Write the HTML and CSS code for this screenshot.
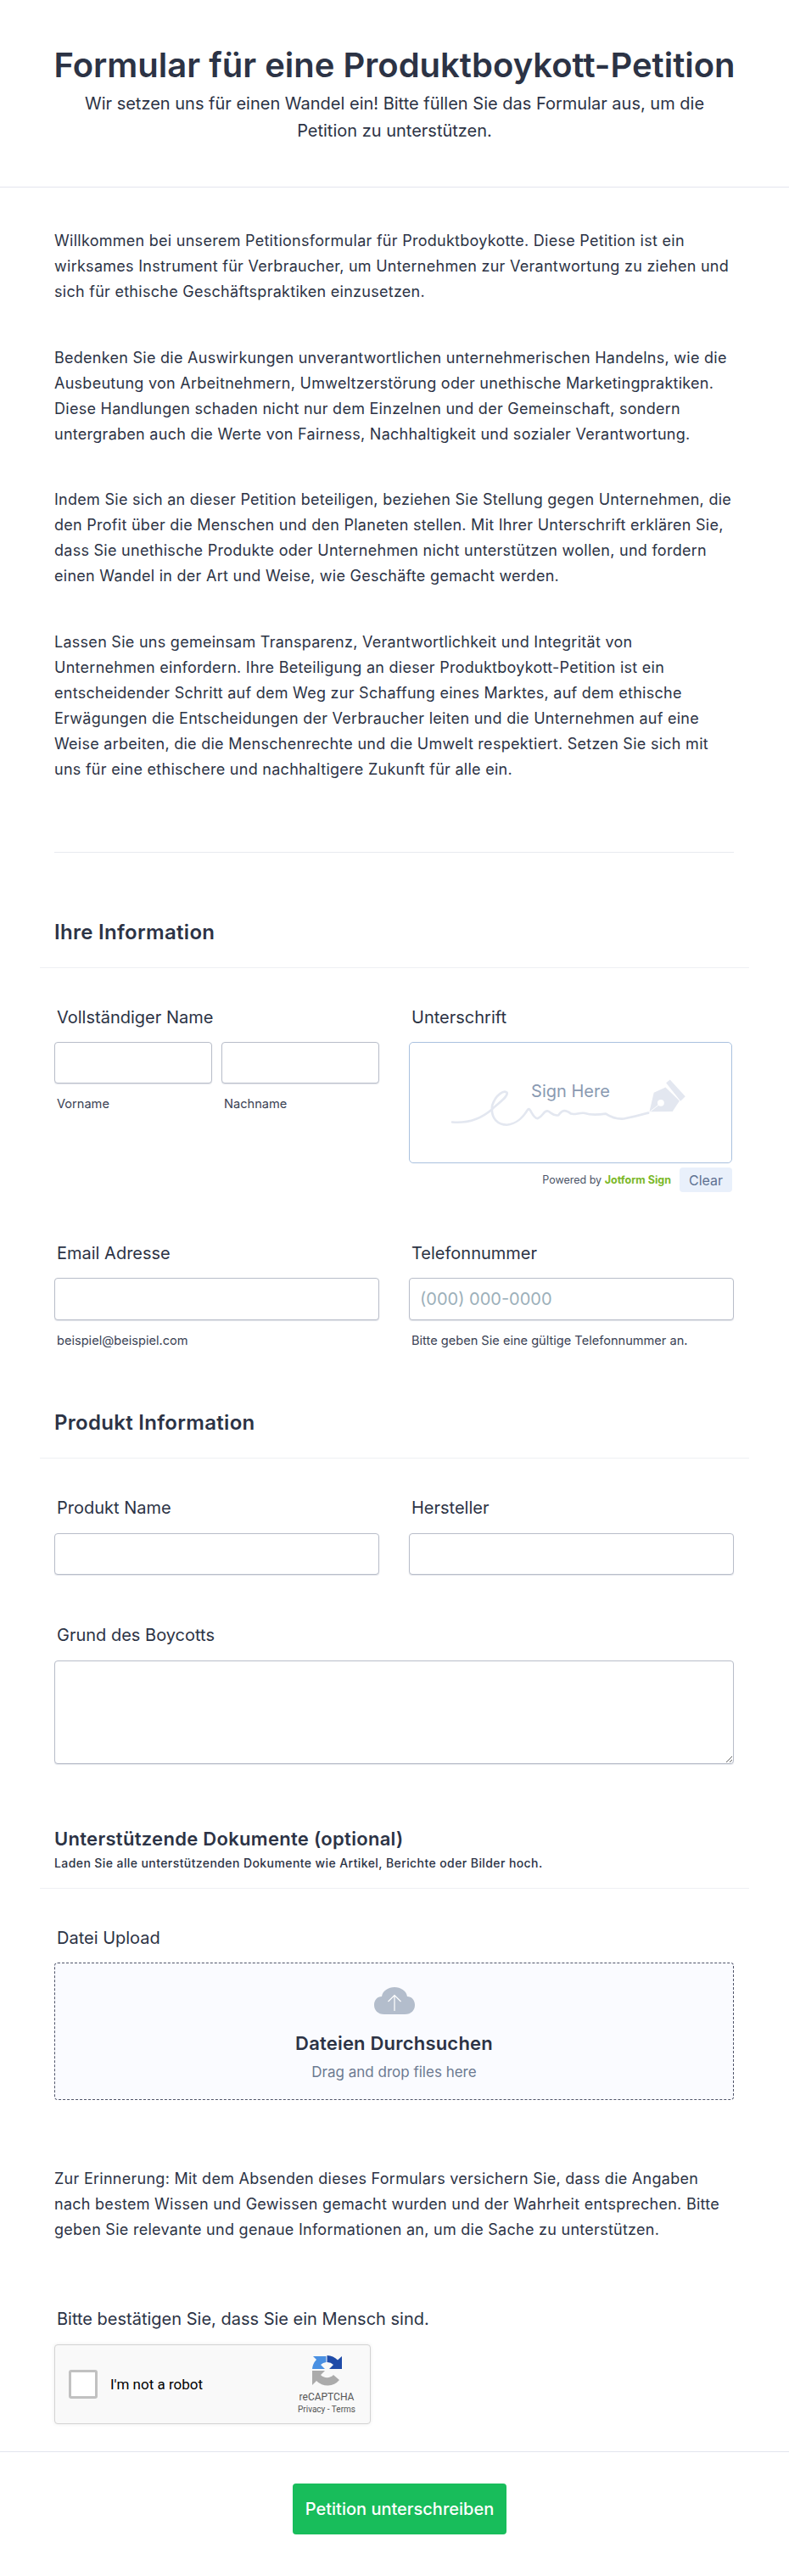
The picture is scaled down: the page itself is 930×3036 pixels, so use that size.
FILE: index.html
```
<!DOCTYPE html>
<html lang="de">
<head>
<meta charset="utf-8">
<title>Formular für eine Produktboykott-Petition</title>
<link rel="stylesheet" href="styles.css">
</head>
<body>
<header class="page-head">
  <h1>Formular für eine Produktboykott-Petition</h1>
  <p>Wir setzen uns für einen Wandel ein! Bitte füllen Sie das Formular aus, um die Petition zu unterstützen.</p>
</header>
<main class="content">
  <section class="intro">
    <p>Willkommen bei unserem Petitionsformular für Produktboykotte. Diese Petition ist ein wirksames Instrument für Verbraucher, um Unternehmen zur Verantwortung zu ziehen und sich für ethische Geschäftspraktiken einzusetzen.</p>
    <p>Bedenken Sie die Auswirkungen unverantwortlichen unternehmerischen Handelns, wie die Ausbeutung von Arbeitnehmern, Umweltzerstörung oder unethische Marketingpraktiken. Diese Handlungen schaden nicht nur dem Einzelnen und der Gemeinschaft, sondern untergraben auch die Werte von Fairness, Nachhaltigkeit und sozialer Verantwortung.</p>
    <p>Indem Sie sich an dieser Petition beteiligen, beziehen Sie Stellung gegen Unternehmen, die den Profit über die Menschen und den Planeten stellen. Mit Ihrer Unterschrift erklären Sie, dass Sie unethische Produkte oder Unternehmen nicht unterstützen wollen, und fordern einen Wandel in der Art und Weise, wie Geschäfte gemacht werden.</p>
    <p>Lassen Sie uns gemeinsam Transparenz, Verantwortlichkeit und Integrität von Unternehmen einfordern. Ihre Beteiligung an dieser Produktboykott-Petition ist ein entscheidender Schritt auf dem Weg zur Schaffung eines Marktes, auf dem ethische Erwägungen die Entscheidungen der Verbraucher leiten und die Unternehmen auf eine Weise arbeiten, die die Menschenrechte und die Umwelt respektiert. Setzen Sie sich mit uns für eine ethischere und nachhaltigere Zukunft für alle ein.</p>
  </section>
  <hr class="divider">

  <div class="sec-head sec-info"><h2>Ihre Information</h2></div>

  <div class="grid row-name">
    <div class="field">
      <label class="lbl">Vollständiger Name</label>
      <div class="name-pair">
        <div><input class="inp" type="text"><span class="sub">Vorname</span></div>
        <div><input class="inp" type="text"><span class="sub">Nachname</span></div>
      </div>
    </div>
    <div class="field field-right">
      <label class="lbl">Unterschrift</label>
      <div class="sign-box">
        <svg class="sign-art" viewBox="0 0 1143 430" aria-hidden="true">
          <g transform="translate(-37 -205)">
            <path d="M183 490C240 495 290 475 325 445C350 420 385 400 380 384C370 374 340 390 327 430C320 480 350 500 380 500C420 495 440 470 455 445C465 435 470 475 490 477C510 470 510 450 525 450C540 455 545 470 565 465C580 445 590 445 610 460C625 465 640 455 660 458C680 465 700 465 735 460C750 470 770 480 800 478C830 472 860 465 888 457" fill="none" stroke="#e3e7f0" stroke-width="8" stroke-linecap="round"/>
            <path d="M892 453L908 384L950 365L1000 414L975 452Z" fill="#e3e7f0"/>
            <path d="M952 349L966 338L1021 398L1004 415Z" fill="#e3e7f0"/>
            <circle cx="933" cy="421" r="12" fill="#fff"/>
            <path d="M895 452L928 426" stroke="#fff" stroke-width="3"/>
          </g>
        </svg>
        <span class="sign-text">Sign Here</span>
      </div>
      <div class="sign-foot">
        <span class="powered">Powered by <b>Jotform Sign</b></span>
        <button class="clear" type="button">Clear</button>
      </div>
    </div>
  </div>

  <div class="grid row-contact">
    <div class="field">
      <label class="lbl">Email Adresse</label>
      <input class="inp inp-tall" type="email">
      <span class="sub">beispiel@beispiel.com</span>
    </div>
    <div class="field">
      <label class="lbl">Telefonnummer</label>
      <input class="inp inp-tall" type="tel" placeholder="(000) 000-0000">
      <span class="sub">Bitte geben Sie eine gültige Telefonnummer an.</span>
    </div>
  </div>

  <div class="sec-head sec-product"><h2>Produkt Information</h2></div>

  <div class="grid row-product">
    <div class="field">
      <label class="lbl">Produkt Name</label>
      <input class="inp" type="text">
    </div>
    <div class="field">
      <label class="lbl">Hersteller</label>
      <input class="inp" type="text">
    </div>
  </div>

  <div class="field row-reason">
    <label class="lbl">Grund des Boycotts</label>
    <textarea class="area"></textarea>
  </div>

  <div class="sec-head sec-docs">
    <h2>Unterstützende Dokumente (optional)</h2>
    <p>Laden Sie alle unterstützenden Dokumente wie Artikel, Berichte oder Bilder hoch.</p>
  </div>

  <div class="field row-upload">
    <label class="lbl">Datei Upload</label>
    <div class="upload">
      <svg class="cloud" viewBox="0 0 48 32" aria-hidden="true">
        <path d="M12 32C4 32 0 27 0 21C0 15 4 11 9 11C10 4 17 0 24 0C31 0 38 4 39 11C44 11 48 15 48 21C48 27 44 32 36 32Z" fill="#b3bdcc"/>
        <path d="M24 28V9.500M16.500 17L24 9.500L31.500 17" fill="none" stroke="#fff" stroke-width="1.200"/>
      </svg>
      <strong>Dateien Durchsuchen</strong>
      <span>Drag and drop files here</span>
    </div>
  </div>

  <p class="reminder">Zur Erinnerung: Mit dem Absenden dieses Formulars versichern Sie, dass die Angaben nach bestem Wissen und Gewissen gemacht wurden und der Wahrheit entsprechen. Bitte geben Sie relevante und genaue Informationen an, um die Sache zu unterstützen.</p>

  <div class="field row-captcha">
    <label class="lbl">Bitte bestätigen Sie, dass Sie ein Mensch sind.</label>
    <div class="captcha">
      <span class="check"></span>
      <span class="robot">I'm not a robot</span>
      <div class="brand">
        <svg class="rc-logo" viewBox="0 0 37 38" aria-hidden="true">
          <path d="M18.500 1A18 18 0 0 1 31 6.500L36 2V17H21L26 12A10.500 10.500 0 0 0 18.500 9Z" fill="#1f4ba8"/>
          <path d="M1 18A18 18 0 0 1 6 6L2 2H17.500V9A10.500 10.500 0 0 0 11 12L16 17H1Z" fill="#4a90e2"/>
          <path d="M1 19V36L6 31A18 18 0 0 0 33 30L26 24A10.500 10.500 0 0 1 11 24L16 19Z" fill="#ababab"/>
        </svg>
        <span class="rc-name">reCAPTCHA</span>
        <span class="rc-links">Privacy - Terms</span>
      </div>
    </div>
  </div>
</main>
<footer class="page-foot">
  <button class="submit" type="button">Petition unterschreiben</button>
</footer>
</body>
</html>
```
FILE: styles.css
```
* { box-sizing: border-box; }
html, body { margin: 0; padding: 0; }
body {
  width: 930px;
  height: 3036px;
  background: #fff;
  color: #2c3345;
  font-family: Inter, "Liberation Sans", sans-serif;
  overflow: hidden;
}
.page-head {
  height: 221px;
  padding: 53px 64px 0;
  border-bottom: 1px solid #e3e5ee;
  text-align: center;
}
.page-head h1 {
  margin: 0 -20px;
  font-size: 40px;
  line-height: 48px;
  font-weight: 600;
  white-space: nowrap;
}
.page-head p {
  margin: 5px 0 0;
  font-size: 20px;
  line-height: 32px;
}
.content { padding: 0 65px 0 64px; }
.intro { padding-top: 48px; }
.intro p {
  margin: 0 0 47.500px;
  font-size: 18px;
  line-height: 30px;
  letter-spacing: .27px;
}
.intro p:last-child { margin-bottom: 0; }
.divider {
  margin: 82.500px 0 0;
  border: 0;
  border-top: 1px solid #e8eaf0;
}
.sec-head {
  margin: 0 -18px 0 -17px;
  padding: 0 17px;
  border-bottom: 1px solid #eef0f4;
}
.sec-head h2 {
  margin: 0;
  font-size: 24px;
  line-height: 32px;
  font-weight: 600;
  letter-spacing: .3px;
}
.sec-info { margin-top: 78px; padding-bottom: 25px; }
.sec-product { margin-top: 71px; padding-bottom: 25px; }
.sec-docs { margin-top: 73px; padding-bottom: 19px; }
.sec-docs h2 { font-size: 22px; line-height: 30px; }
.sec-docs p {
  margin: 4px 0 0;
  font-size: 14px;
  line-height: 20px;
  font-weight: 500;
  letter-spacing: .41px;
}
.grid {
  display: grid;
  grid-template-columns: 383px 383px;
  column-gap: 35px;
}
.row-name { margin-top: 46px; }
.row-contact { margin-top: 60px; }
.row-product { margin-top: 46px; }
.row-reason { margin-top: 59px; }
.row-upload { margin-top: 46px; }
.row-captcha { margin-top: 78px; }
.field { min-width: 0; }
.lbl {
  display: block;
  margin: 0 0 17px 3px;
  font-size: 20px;
  line-height: 24px;
  font-weight: 400;
}
.row-product .lbl,
.row-reason .lbl,
.row-captcha .lbl { margin-bottom: 18px; }
.inp {
  display: block;
  width: 100%;
  height: 49px;
  padding: 0 12px;
  background: #fff;
  border: 1px solid #b8bdc9;
  border-radius: 4px;
  font: 400 20px Inter, "Liberation Sans", sans-serif;
  color: #2c3345;
  box-shadow: 0 1px 1px rgba(140, 147, 170, .25);
}
.inp-tall { height: 50px; }
.inp::placeholder { color: #9cb0ba; opacity: 1; }
.sub {
  display: block;
  margin: 14px 0 0 3px;
  font-size: 14.600px;
  line-height: 20px;
  color: #3a4254;
}
.name-pair {
  display: grid;
  grid-template-columns: 186px 186px;
  column-gap: 11px;
}
.sign-box {
  position: relative;
  width: 381px;
  height: 143px;
  border: 1px solid #a9c1df;
  border-radius: 5px;
}
.sign-art {
  position: absolute;
  left: 0;
  top: 0;
  width: 100%;
  height: 100%;
}
.sign-text {
  position: absolute;
  left: 0;
  right: 0;
  top: 45px;
  text-align: center;
  font-size: 20px;
  line-height: 24px;
  font-weight: 400;
  color: #8a9ab2;
}
.sign-foot {
  display: flex;
  justify-content: flex-end;
  align-items: center;
  gap: 10px;
  width: 381px;
  margin-top: 5px;
}
.powered { font-size: 12.500px; line-height: 20px; color: #4c5568; }
.powered b { color: #7bb827; font-weight: 700; }
.clear {
  width: 62px;
  height: 29px;
  padding: 0;
  border: 0;
  border-radius: 4px;
  background: #e9f0fb;
  color: #5e7191;
  font: 400 16px Inter, "Liberation Sans", sans-serif;
}
.area {
  display: block;
  width: 100%;
  height: 122px;
  padding: 10px 12px;
  background: #fff;
  border: 1px solid #b8bdc9;
  border-radius: 4px;
  box-shadow: 0 1px 1px rgba(140, 147, 170, .25);
}
.upload {
  display: flex;
  flex-direction: column;
  align-items: center;
  height: 162px;
  padding-top: 28px;
  background: #fafbff;
  border: 1px dashed #50556a;
  border-radius: 4px;
}
.cloud { width: 48px; height: 32px; display: block; }
.upload strong {
  margin-top: 20px;
  font-size: 22px;
  line-height: 28px;
  font-weight: 600;
  letter-spacing: .2px;
}
.upload span {
  margin-top: 8px;
  font-size: 17px;
  line-height: 24px;
  color: #6c7a91;
}
.reminder {
  margin: 78px 0 0;
  font-size: 18px;
  line-height: 30px;
  letter-spacing: .27px;
}
.captcha {
  display: flex;
  align-items: center;
  width: 373px;
  height: 94px;
  padding: 0 16px;
  background: #f9f9f9;
  border: 1px solid #d3d3d3;
  border-radius: 4px;
  box-shadow: 0 0 4px rgba(0, 0, 0, .08);
  font-family: Roboto, "Liberation Sans", sans-serif;
}
.check {
  flex: none;
  width: 34px;
  height: 34px;
  background: #fff;
  border: 3px solid #c1c1c1;
  border-radius: 3px;
}
.robot { margin-left: 15px; font-size: 17px; color: #000; }
.brand {
  margin-left: auto;
  display: flex;
  flex-direction: column;
  align-items: center;
  width: 70px;
}
.rc-logo { width: 37px; height: 38px; display: block; }
.rc-name { margin-top: 4px; font-size: 12px; line-height: 16px; color: #555; }
.rc-links { font-size: 10px; line-height: 13px; color: #555; }
.page-foot {
  margin-top: 32px;
  display: flex;
  justify-content: center;
  padding: 37px 0 0 12px;
  border-top: 1px solid #e3e5ee;
}
.submit {
  width: 252px;
  height: 60px;
  padding: 0;
  border: 0;
  border-radius: 4px;
  background: #18bd5b;
  color: #fff;
  font: 500 20px Inter, "Liberation Sans", sans-serif;
}
```
